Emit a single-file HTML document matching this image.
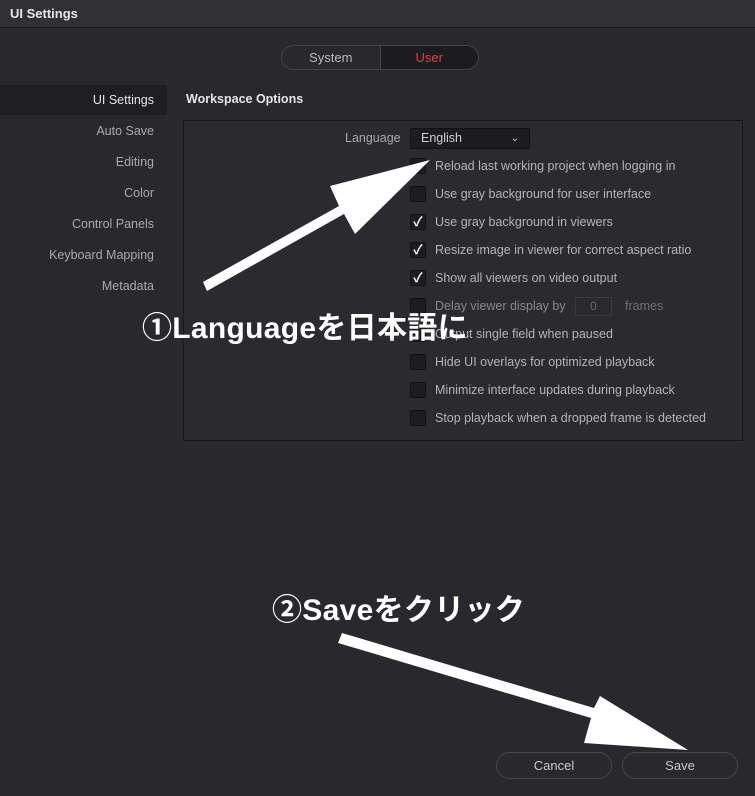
<!DOCTYPE html>
<html><head><meta charset="utf-8"><style>
*{margin:0;padding:0;box-sizing:border-box}
body{width:755px;height:796px;background:#28282d;font-family:"Liberation Sans","Noto Sans CJK JP",sans-serif;position:relative;overflow:hidden;color:#bdbdc0}
.abs{position:absolute}
.title{left:0;top:0;width:755px;height:28px;background:#303035;border-bottom:1px solid #18181b;color:#e8e8ea;font-weight:bold;font-size:13px;line-height:28px;padding-left:10px}
.tog{left:281px;top:45px;width:198px;height:25px;border:1px solid #444449;border-radius:13px;overflow:hidden;display:flex;font-size:13px}
.tog div{flex:1;text-align:center;line-height:23px}
.side{font-size:12.5px;color:#a9a9ad;text-align:right;width:167px;padding-right:13px;height:30px;line-height:30px;left:0}
.panel{left:183px;top:120px;width:560px;height:321px;border:1px solid #18181b;background:#2a2a2f}
.cb{left:410px;width:16px;height:16px;background:#1d1d20;border:1px solid #121214;border-radius:2px;color:#fff;font-size:13px;line-height:14px;text-align:center;font-weight:bold}
.lb{left:435px;font-size:12.5px;color:#b4b4b8;line-height:16px}
.btn{top:752px;height:27px;border:1px solid #46464b;border-radius:14px;text-align:center;line-height:25px;font-size:13px;color:#c8c8cc}
.ann{color:#fff;font-weight:bold;font-size:30px;letter-spacing:0.3px}
</style></head><body>
<div class="abs title">UI Settings</div>
<div class="abs tog"><div style="color:#b9b9bd">System</div><div style="background:#1c1c20;color:#d9433d;border-left:1px solid #444449">User</div></div>

<div class="abs side" style="top:85px;background:#1e1e22;color:#e6e6e8">UI Settings</div>
<div class="abs side" style="top:116px">Auto Save</div>
<div class="abs side" style="top:147px">Editing</div>
<div class="abs side" style="top:178px">Color</div>
<div class="abs side" style="top:209px">Control Panels</div>
<div class="abs side" style="top:240px">Keyboard Mapping</div>
<div class="abs side" style="top:271px">Metadata</div>

<div class="abs" style="left:186px;top:92px;font-size:12.5px;color:#e6e6e8;font-weight:bold">Workspace Options</div>
<div class="abs panel"></div>
<div class="abs" style="left:345px;top:131px;font-size:12.5px;color:#a9a9ad">Language</div>
<div class="abs" style="left:410px;top:128px;width:120px;height:21px;background:#1c1c1f;border:1px solid #111;border-radius:2px;font-size:12.5px;color:#cfcfd2;line-height:19px;padding-left:10px">English<span style="position:absolute;right:10px;top:0;font-size:10px">&#8964;</span></div>

<div class="abs cb" style="top:158px"></div><div class="abs lb" style="top:158px">Reload last working project when logging in</div>
<div class="abs cb" style="top:186px"></div><div class="abs lb" style="top:186px">Use gray background for user interface</div>
<div class="abs cb" style="top:214px">✓</div><div class="abs lb" style="top:214px">Use gray background in viewers</div>
<div class="abs cb" style="top:242px">✓</div><div class="abs lb" style="top:242px">Resize image in viewer for correct aspect ratio</div>
<div class="abs cb" style="top:270px">✓</div><div class="abs lb" style="top:270px">Show all viewers on video output</div>
<div class="abs cb" style="top:298px"></div><div class="abs lb" style="top:298px;color:#88888c">Delay viewer display by</div>
<div class="abs" style="left:575px;top:297px;width:37px;height:19px;border:1px solid #3a3a3e;background:#2a2a2e;font-size:12px;color:#6a6a6e;text-align:center;line-height:17px">0</div>
<div class="abs lb" style="left:625px;top:298px;color:#6f6f73">frames</div>
<div class="abs cb" style="top:326px"></div><div class="abs lb" style="top:326px">Output single field when paused</div>
<div class="abs cb" style="top:354px"></div><div class="abs lb" style="top:354px">Hide UI overlays for optimized playback</div>
<div class="abs cb" style="top:382px"></div><div class="abs lb" style="top:382px">Minimize interface updates during playback</div>
<div class="abs cb" style="top:410px"></div><div class="abs lb" style="top:410px">Stop playback when a dropped frame is detected</div>

<div class="abs btn" style="left:496px;width:116px">Cancel</div>
<div class="abs btn" style="left:622px;width:116px">Save</div>

<svg class="abs" style="left:0;top:0" width="755" height="796">
<polygon fill="#fff" points="203,282 207,291 344,214 355,234 430,160 330,186 339,206"/>
<polygon fill="#fff" points="342,633 338,643 591,718 584,743 688,750 600,696 594,708"/>
</svg>
<div class="abs ann" style="left:142px;top:303px">①Languageを日本語に</div>
<div class="abs ann" style="left:272px;top:585px">②Saveをクリック</div>
</body></html>
